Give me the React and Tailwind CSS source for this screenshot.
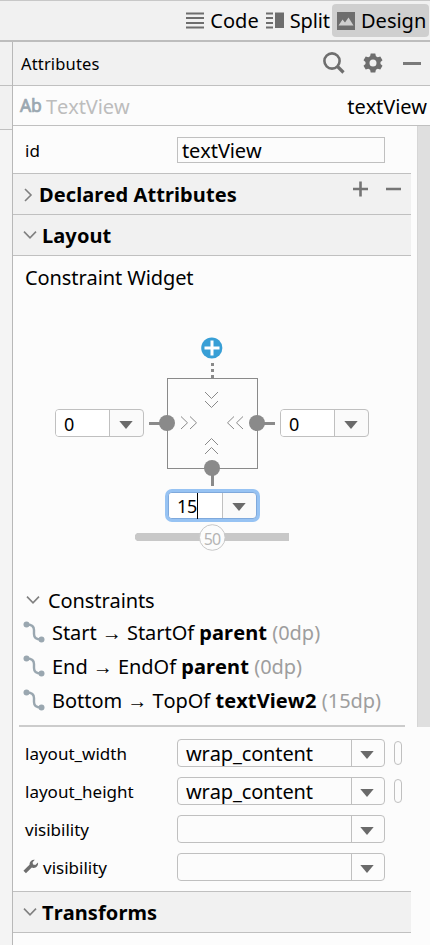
import React from "react";

function Arrow({ className = "" }) {
  return (
    <svg width="14" height="8" viewBox="0 0 14 8" className={className}>
      <path d="M0.3 0H13.7L7 8Z" fill="#6a6a6a" />
    </svg>
  );
}

function Chevron({ open = true, className = "" }) {
  return (
    <svg width="14" height="14" viewBox="0 0 14 14" fill="none" stroke="#808080" strokeWidth="1.6" className={className}>
      <path d={open ? "M1 3.6L7 9.8L13 3.6" : "M2 1L8 7L2 13"} />
    </svg>
  );
}

function Combo({ value = "" }) {
  return (
    <div className="-mt-[2px] flex h-7 w-52 shrink-0 rounded-[4px] border border-[#c0c0c0] bg-[#fcfcfc]">
      <div className="w-[174px] border-r border-[#c0c0c0] pl-2 text-[20px] leading-[27px] tracking-[-0.14px]">{value}</div>
      <div className="flex flex-1 items-center justify-center pt-[3px] pr-[2px]"><Arrow /></div>
    </div>
  );
}

function MarginInput({ value, focused = false, className = "" }) {
  return (
    <div
      className={`absolute flex rounded-[4px] border bg-[#fafafa] ${focused ? "h-[27px] w-[89px] border-[#7fa9dc] shadow-[0_0_0_3px_#97c3f3]" : "h-7 w-[89px] border-[#c0c0c0]"} ${className}`}
    >
      <div className="flex w-[54px] items-center rounded-l-[3px] border-r border-[#c0c0c0] bg-white pl-2 text-[18px] leading-[26px]">
        <span className={focused ? "tracking-[-0.4px]" : "relative top-px"}>{value}</span>
        {focused && <span className="h-[26px] w-px bg-black" />}
      </div>
      <div className="flex flex-1 items-center justify-center pt-[3px] pr-[2px]"><Arrow /></div>
    </div>
  );
}

function Section({ title, open = true, children }) {
  return (
    <div className="flex h-[41px] w-[398px] items-center border-b border-[#c0c0c0] bg-[#f1f1f1] pt-[2px] pl-[10px] text-[20px] font-bold">
      <Chevron open={open} className={open ? "-mt-[3px]" : "-mt-px"} />
      <span className={open ? "ml-[5px] tracking-[0.1px]" : "ml-[2px] tracking-[0.1px]"}>{title}</span>
      {children}
    </div>
  );
}

function Constraint({ from, to, target, dp }) {
  return (
    <div className="flex h-[34px] items-center pl-[10px] text-[20px] whitespace-pre">
      <svg width="22" height="22" viewBox="0 0 22 22" className="-mt-[2px] mr-[7px]" fill="none">
        <path d="M4 3.5C9 3.5 11 5.5 11 9V13C11 16.500 13 18.500 18 18.500" stroke="#9aa7b0" strokeWidth="2.4" />
        <circle cx="3.500" cy="3.500" r="3" fill="#9aa7b0" />
        <circle cx="18.500" cy="18.500" r="3" fill="#9aa7b0" />
      </svg>
      <span className="tracking-[-0.04px]">{from} → {to} <b className="tracking-[0.1px]">{target}</b> <span className="text-[#9e9e9e]">({dp})</span></span>
    </div>
  );
}

function Row({ label, value, pill, wrench }) {
  return (
    <div className="flex h-[38px] items-center">
      <div className="flex w-[164px] items-center pl-3 text-[17px]">
        {wrench && (
          <svg width="16" height="16" viewBox="0 0 16 16" className="-mt-[2px] mr-1 -ml-[2px]">
            <path d="M1.700 13L8 6.800" stroke="#6e6e6e" strokeWidth="3.600" />
            <path d="M11.800 0.700L9.600 3.300L10 5.500L12.300 6L15 3.600C15.500 6.800 13.300 9.200 10.500 9C7.800 8.900 6.400 7 6.600 4.600C6.800 2.300 9 0.300 11.800 0.700Z" fill="#6e6e6e" />
          </svg>
        )}
        {label}
      </div>
      <Combo value={value} />
      {pill && <div className="-mt-[2px] ml-[9px] h-6 w-2 rounded-[4px] border border-[#c0c0c0] bg-[#fcfcfc]" />}
    </div>
  );
}

function ConstraintWidget() {
  return (
    <div className="relative h-[288px]">
      <svg width="398" height="288" viewBox="13 295 398 288" className="block" fill="none">
        <circle cx="211.800" cy="348" r="10.600" fill="#389fd6" />
        <path d="M204.500 348H219.500M212 340.500V355.500" stroke="#fff" strokeWidth="3" />
        <path d="M211 363h3v3h-3zM211 369h3v3h-3zM211 375h3v3h-3z" fill="#8a8a8a" />
        <rect x="167.500" y="378.500" width="90" height="90" stroke="#8a8a8a" />
        <path d="M149 423.500H167M257 423.500H275M212.500 468V486" stroke="#8a8a8a" strokeWidth="3" />
        <circle cx="167" cy="423" r="8" fill="#8a8a8a" />
        <circle cx="257" cy="423" r="8" fill="#8a8a8a" />
        <circle cx="212" cy="468" r="8" fill="#8a8a8a" />
        <path
          d="M205 392L211.500 398.500L218 392M205 401L211.500 407.500L218 401M205 445L211.500 438.500L218 445M205 454L211.500 447.500L218 454M181 416.500L187.500 422.800L181 429M190 416.500L196.500 422.800L190 429M234 416.500L227.500 422.800L234 429M243 416.500L236.500 422.800L243 429"
          stroke="#8a8a8a"
        />
        <path d="M137 533H289V541H137L135 539V535Z" fill="#c8c8c8" />
        <circle cx="212.300" cy="537.500" r="12.800" fill="#fcfcfc" stroke="#c8c8c8" />
      </svg>
      <MarginInput value="0" className="top-[114px] left-[42px]" />
      <MarginInput value="0" className="top-[114px] left-[267px]" />
      <MarginInput value="15" focused className="top-[197px] left-[155px]" />
      <span className="absolute top-[233px] left-[186px] w-[26px] text-center text-[16px] leading-[22px] tracking-[-0.8px] text-[#b4b4b4]">50</span>
    </div>
  );
}

export default function App() {
  return (
    <div className="flex h-[945px] w-[430px] flex-col overflow-hidden bg-[#fcfcfc] font-['Noto_Sans',sans-serif] text-black [font-kerning:none]">
      <div className="flex h-[42px] shrink-0 items-center justify-end border-t border-b-2 border-t-[#c8c8c8] border-b-[#bdbdbd] bg-[#f1f1f1] text-[20px]">
        <svg width="18" height="17" viewBox="0 0 18 17" className="mr-[6px]">
          <path d="M0 1.500H18M0 6H18M0 11H18M0 15.500H18" stroke="#6e6e6e" strokeWidth="2" />
        </svg>
        <span>Code</span>
        <svg width="18" height="17" viewBox="0 0 18 17" className="mr-[6px] ml-[7px]">
          <path d="M0 1.500H7M0 6H7M0 11H7M0 15.500H7" stroke="#6e6e6e" strokeWidth="2" />
          <path d="M9 0.500H18V16H9Z" fill="#6e6e6e" />
        </svg>
        <span className="tracking-[-0.1px]">Split</span>
        <div className="mr-px ml-[2px] flex h-[33px] w-[97px] items-center rounded-[4px] bg-[#cfcfcf] pl-[5px]">
          <svg width="18" height="18" viewBox="0 0 18 18" className="mr-[6px] shrink-0">
            <path d="M0 0H18V18H0Z" fill="#6e6e6e" />
            <path d="M1.500 13.500L5.500 7.500L8 10.500L11.500 5.500L16.500 13.500Z" fill="#cfcfcf" />
          </svg>
          Design
        </div>
      </div>
      <div className="flex min-h-0 flex-1">
        <div className="w-3 shrink-0 bg-[#f4f4f4]">
          <div className="h-11 border-b border-[#c0c0c0] bg-[#f1f1f1]" />
          <div className="h-11 border-b border-[#c0c0c0] bg-[#f1f1f1]" />
        </div>
        <div className="flex min-w-0 flex-1 flex-col border-l border-[#b8b8b8]">
          <div className="flex h-11 shrink-0 items-center border-b border-[#c0c0c0] bg-[#f1f1f1] pl-2 text-[16.500px]">
            <span className="flex-1 pt-[2px] tracking-[0.15px]">Attributes</span>
            <svg width="22" height="22" viewBox="0 0 22 22" fill="none" stroke="#6e6e6e" className="-mt-[2px] mr-[18px]">
              <circle cx="9" cy="9" r="7.600" strokeWidth="2.600" />
              <path d="M14 14L20.500 20.500" strokeWidth="3.200" />
            </svg>
            <svg width="20" height="20" viewBox="0 0 20 20" className="-mt-px mr-[20px]">
              <path
                fillRule="evenodd"
                fill="#6e6e6e"
                d="M7.700 0.500H12.300L12.900 3.200L14.700 4.200L17.300 3.400L19.500 7.300L17.500 9.100V10.900L19.500 12.700L17.300 16.600L14.700 15.800L12.900 16.800L12.300 19.500H7.700L7.100 16.800L5.300 15.800L2.700 16.600L0.500 12.700L2.500 10.900V9.100L0.500 7.300L2.700 3.400L5.300 4.200L7.100 3.200ZM10 6.500A3.500 3.500 0 1 0 10 13.500A3.500 3.500 0 1 0 10 6.500Z"
              />
            </svg>
            <div className="mr-[9px] -mt-px h-[3px] w-[18px] bg-[#7a7a7a]" />
          </div>
          <div className="flex h-10 shrink-0 items-center border-b border-[#c0c0c0] pt-[2px] pr-[3px] pl-[7px] text-[20px]">
            <span className="-mt-[2px] w-[26px] text-[17.500px] tracking-[-0.3px] text-[#9aa7b0] [-webkit-text-stroke:0.7px_#9aa7b0]">Ab</span>
            <span className="flex-1 tracking-[-0.1px] text-[#bdbdbd]">TextView</span>
            <span className="tracking-[-0.1px]">textView</span>
          </div>
          <div className="flex min-h-0 flex-1 justify-between">
            <div className="w-[398px]">
              <div className="flex h-12 items-center border-b border-[#c0c0c0]">
                <span className="w-[164px] pt-[2px] pl-3 text-[17px]">id</span>
                <div className="h-[26px] w-52 border border-[#c0c0c0] pl-1 text-[20px] leading-[25px] tracking-[-0.1px]">textView</div>
              </div>
              <Section title="Declared Attributes" open={false}>
                <svg width="48" height="16" viewBox="0 0 48 16" className="-mt-3 mr-[10px] ml-auto" stroke="#757575" strokeWidth="2.600">
                  <path d="M0 8H15M7.500 0.500V15.500M33 8H48" />
                </svg>
              </Section>
              <Section title="Layout" />
              <div className="h-[39px] pt-2 pl-3 text-[20px] leading-[28px] tracking-[-0.1px]">Constraint Widget</div>
              <ConstraintWidget />
              <div className="flex h-[33px] items-center pt-[2px] pl-[13px] text-[20px]">
                <Chevron className="-mt-[2px] mr-2" />
                <span className="tracking-[-0.1px]">Constraints</span>
              </div>
              <Constraint from="Start" to="StartOf" target="parent" dp="0dp" />
              <Constraint from="End" to="EndOf" target="parent" dp="0dp" />
              <Constraint from="Bottom" to="TopOf" target="textView2" dp="15dp" />
              <div className="mt-[7px] mb-2 ml-[6px] h-[2px] w-[386px] bg-[#cccccc]" />
              <Row label="layout_width" value="wrap_content" pill />
              <Row label="layout_height" value="wrap_content" pill />
              <Row label="visibility" />
              <Row label="visibility" wrench />
              <div className="mt-1 border-t border-[#c0c0c0]"><Section title="Transforms" /></div>
            </div>
            <div className="h-[601px] w-[13px] border-l border-[#d6d6d6] bg-[#dfdfdf]" />
          </div>
        </div>
      </div>
    </div>
  );
}
